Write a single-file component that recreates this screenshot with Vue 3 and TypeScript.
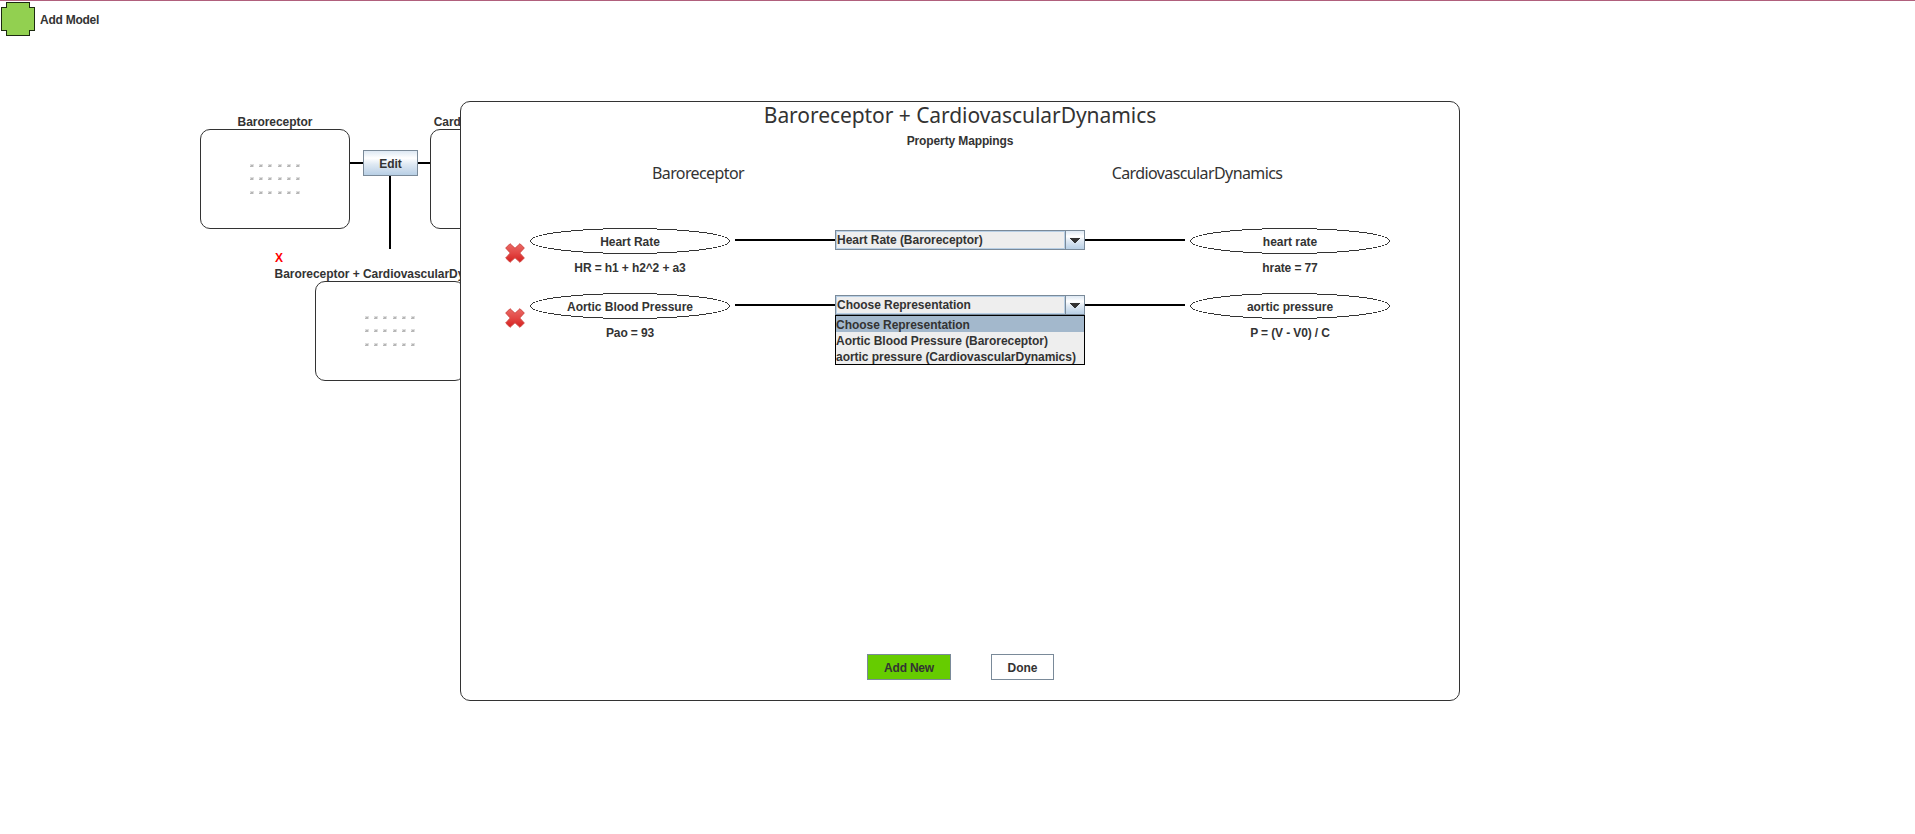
<script setup lang="ts">
interface ModelBox {
  name: string
  place: string
}

interface Side {
  label: string
  formula: string
}

interface Mapping {
  left: Side
  right: Side
  choice: string
  options: string[]
  open: boolean
}

const models: ModelBox[] = [
  { name: 'Baroreceptor', place: 'first' },
  { name: 'CardiovascularDynamics', place: 'second' },
  { name: 'Baroreceptor + CardiovascularDynamics', place: 'merged' },
]

const dotColumns: number[] = [0, 9, 18, 28, 37, 46]
const dotRows: number[] = [0, 13, 27]

const mappings: Mapping[] = [
  {
    left: { label: 'Heart Rate', formula: 'HR = h1 + h2^2 + a3' },
    right: { label: 'heart rate', formula: 'hrate = 77' },
    choice: 'Heart Rate (Baroreceptor)',
    options: [],
    open: false,
  },
  {
    left: { label: 'Aortic Blood Pressure', formula: 'Pao = 93' },
    right: { label: 'aortic pressure', formula: 'P = (V - V0) / C' },
    choice: 'Choose Representation',
    options: [
      'Choose Representation',
      'Aortic Blood Pressure (Baroreceptor)',
      'aortic pressure (CardiovascularDynamics)',
    ],
    open: true,
  },
]
</script>

<template>
  <main class="workspace">
    <header class="toolbar">
      <svg class="plus" width="36" height="36" viewBox="0 0 36 36" shape-rendering="crispEdges">
        <path
          d="M6.500 1.500H29.500V6.500H34.500V29.500H29.500V34.500H6.500V29.500H1.500V6.500H6.500Z"
          fill="#92d050"
          stroke="#1c2a10"
        />
      </svg>
      <span class="add-label">Add Model</span>
    </header>

    <section class="canvas">
      <div class="wire wire-across"></div>
      <div class="wire wire-down"></div>
      <button class="edit">Edit</button>
      <span class="remove">X</span>
      <article v-for="m in models" :key="m.name" class="model" :class="m.place">
        <span class="model-name">{{ m.name }}</span>
        <div class="model-box">
          <svg width="50" height="30" viewBox="0 0 50 30" shape-rendering="crispEdges">
            <template v-for="y in dotRows" :key="y">
              <g v-for="x in dotColumns" :key="x" :transform="`translate(${x} ${y})`">
                <rect width="4" height="3" fill="#dedede" />
                <rect x="1" y="1" width="2" height="1" fill="#b4b4b4" />
                <rect y="2" width="3" height="1" fill="#b8b8b8" />
              </g>
            </template>
          </svg>
        </div>
      </article>
    </section>

    <section class="dialog">
      <h1>Baroreceptor + CardiovascularDynamics</h1>
      <h2>Property Mappings</h2>
      <div class="columns">
        <span class="col-left">Baroreceptor</span>
        <span class="col-right">CardiovascularDynamics</span>
      </div>

      <div class="rows">
        <div v-for="row in mappings" :key="row.left.label" class="row">
          <svg class="cross" width="20" height="20" viewBox="0 0 20 20">
            <defs>
              <linearGradient id="crossFill" x1="0" y1="0" x2="0" y2="1">
                <stop offset="0" stop-color="#e96a66" />
                <stop offset="0.500" stop-color="#e34845" />
                <stop offset="1" stop-color="#d5201f" />
              </linearGradient>
            </defs>
            <path
              d="M5 0.700L10 5.300L15 0.700L19.300 5L14.700 10L19.300 15L15 19.300L10 14.700L5 19.300L0.700 15L5.300 10L0.700 5Z"
              fill="url(#crossFill)"
              stroke="#d04440"
              stroke-width="1"
              stroke-linejoin="round"
            />
          </svg>
          <div class="side">
            <div class="oval">
              <svg width="200" height="26" viewBox="0 0 200 26" shape-rendering="crispEdges">
                <ellipse cx="100" cy="13" rx="99.500" ry="12.500" fill="none" stroke="#333" />
              </svg>
              <span>{{ row.left.label }}</span>
            </div>
            <div class="formula">{{ row.left.formula }}</div>
          </div>
          <div class="link"></div>
          <div class="combo">
            <div class="combo-field">
              <span class="combo-value">{{ row.choice }}</span>
              <span class="combo-arrow">
                <svg width="10" height="5" viewBox="0 0 10 5" shape-rendering="crispEdges">
                  <path d="M0 0H10V1H9V2H8V3H7V4H6V5H4V4H3V3H2V2H1V1H0Z" fill="#333" />
                </svg>
              </span>
            </div>
            <ul v-if="row.open" class="popup">
              <li v-for="(o, i) in row.options" :key="o" :class="{ chosen: i === 0 }">{{ o }}</li>
            </ul>
          </div>
          <div class="link"></div>
          <div class="side side-right">
            <div class="oval">
              <svg width="200" height="26" viewBox="0 0 200 26" shape-rendering="crispEdges">
                <ellipse cx="100" cy="13" rx="99.500" ry="12.500" fill="none" stroke="#333" />
              </svg>
              <span>{{ row.right.label }}</span>
            </div>
            <div class="formula">{{ row.right.formula }}</div>
          </div>
        </div>
      </div>

      <footer class="actions">
        <button class="add">Add New</button>
        <button class="done">Done</button>
      </footer>
    </section>
  </main>
</template>

<style>
body {
  background: #fff;
}
</style>

<style scoped>
.workspace {
  position: relative;
  box-sizing: border-box;
  width: 1915px;
  height: 834px;
  overflow: hidden;
  border-top: 1px solid #b0607c;
  background: #fff;
  color: #333;
  font: bold 12px/14px "Liberation Sans", Arial, sans-serif;
  letter-spacing: -0.040px;
  white-space: nowrap;
}

.toolbar {
  display: flex;
  align-items: center;
  gap: 4px;
}

.plus {
  display: block;
}

.add-label {
  padding-top: 2px;
  letter-spacing: -0.250px;
}

button {
  box-sizing: border-box;
  height: 26px;
  margin: 0;
  padding: 2px 0 0;
  border: 1px solid #7a8a99;
  border-radius: 0;
  color: #333;
  font: inherit;
}

.canvas {
  position: absolute;
  inset: -1px 0 0 0;
}

.wire {
  position: absolute;
  background: #000;
}

.wire-across {
  left: 350px;
  top: 162px;
  width: 80px;
  height: 2px;
}

.wire-down {
  left: 389px;
  top: 170px;
  width: 2px;
  height: 79px;
}

.edit {
  position: absolute;
  left: 363px;
  top: 150px;
  width: 55px;
  background: linear-gradient(#dde8f3, #fff 30%, #dfe9f3 55%, #b8cfe5);
}

.remove {
  position: absolute;
  left: 275px;
  top: 251px;
  color: #f00;
}

.model {
  position: absolute;
  display: flex;
  flex-direction: column;
  align-items: center;
  gap: 0;
  width: 150px;
}

.model-name {
  height: 14px;
}

.model-box {
  box-sizing: border-box;
  width: 150px;
  height: 100px;
  padding: 34px 0 0 49px;
  border: 1px solid #333;
  border-radius: 10px;
}

.model-box svg {
  display: block;
}

.first {
  left: 200px;
  top: 115px;
}

.second {
  left: 430px;
  top: 115px;
}

.merged {
  left: 315px;
  top: 267px;
}

.dialog {
  position: absolute;
  left: 460px;
  top: 100px;
  box-sizing: border-box;
  width: 1000px;
  height: 600px;
  border: 1px solid #333;
  border-radius: 10px;
  background: #fff;
  text-align: center;
}

h1 {
  margin: 0;
  height: 30px;
  font: 21px/26px "Noto Sans", "Open Sans", sans-serif;
  letter-spacing: -0.060px;
}

h2 {
  margin: 2px 0 0;
  font: inherit;
  letter-spacing: -0.120px;
}

.columns {
  display: flex;
  margin-top: 13px;
  font: 16px/24px "Noto Sans", "Open Sans", sans-serif;
  letter-spacing: -0.600px;
}

.col-left {
  margin-left: 137px;
  width: 200px;
}

.col-right {
  margin-left: 299px;
  width: 200px;
}

.rows {
  display: flex;
  flex-direction: column;
  margin: 43px 0 0 44px;
}

.row {
  display: flex;
  height: 65px;
}

.cross {
  flex: none;
  margin: 15px 5px 0 0;
}

.side {
  width: 200px;
}

.oval {
  display: grid;
  height: 26px;
}

.oval > * {
  grid-area: 1 / 1;
}

.oval span {
  padding-top: 7px;
}

.formula {
  padding-top: 7px;
  letter-spacing: -0.110px;
}

.link {
  width: 100px;
  height: 2px;
  margin: 11px 0 0 5px;
  background: #000;
}

.combo + .link {
  margin-left: 0;
}

.side-right {
  margin-left: 5px;
}

.combo {
  position: relative;
  width: 250px;
  margin-top: 2px;
  text-align: left;
}

.combo-field {
  box-sizing: border-box;
  display: flex;
  height: 20px;
  border: 1px solid #7a8a99;
}

.combo-value {
  box-sizing: border-box;
  width: 229px;
  border: 1px solid #b8cfe5;
  background: #eee;
  line-height: 16px;
}

.combo-arrow {
  display: flex;
  align-items: center;
  justify-content: center;
  flex: 1;
  border-left: 1px solid #7a8a99;
  background: linear-gradient(#dde8f3, #fff 30%, #dfe9f3 55%, #b8cfe5);
}

.popup {
  position: absolute;
  left: 0;
  top: 20px;
  box-sizing: border-box;
  width: 250px;
  margin: 0;
  padding: 0;
  border: 1px solid #000;
  background: #eee;
  list-style: none;
}

.popup li {
  height: 16px;
  line-height: 18px;
}

.popup .chosen {
  background: #a3b8cc;
}

.actions {
  position: absolute;
  left: 406px;
  bottom: 20px;
  display: flex;
  gap: 40px;
}

.add {
  width: 84px;
  background: #6c0;
  letter-spacing: -0.200px;
}

.done {
  width: 63px;
  background: #fff;
}
</style>
